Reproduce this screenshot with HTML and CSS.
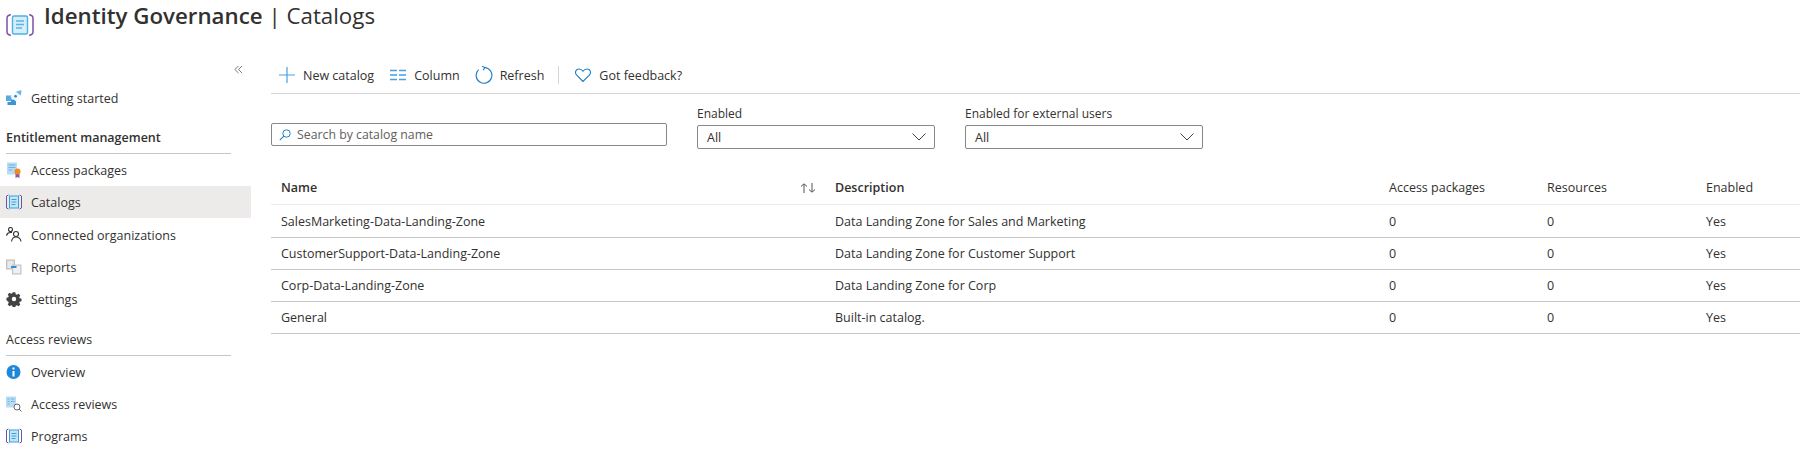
FILE: index.html
```html
<!DOCTYPE html>
<html lang="en">
<head>
    <meta charset="UTF-8">
    <meta name="viewport" content="width=device-width, initial-scale=1.0">
    <title>Identity Governance | Catalogs</title>
    <link rel="stylesheet" href="styles.css">
</head>
<body>
    <header class="page-head">
        <svg class="head-icon" viewBox="0 0 28 24" fill="none">
            <rect x="6.500" y="3" width="15" height="18" rx="1.500" fill="#d6eefa" stroke="#4fb0e4" stroke-width="1.400"/>
            <path d="M10 8h8M10 11.500h8M10 15h6" stroke="#5cb4e4" stroke-width="1.300"/>
            <path d="M4.800 1.500 2.500 2.500Q1 3.200 1 5v14q0 1.800 1.500 2.500l2.300 1M23.200 1.500l2.300 1Q27 3.200 27 5v14q0 1.800-1.500 2.500l-2.300 1" stroke="#7f4fa8" stroke-width="1.500"/>
        </svg>
        <h1 class="page-title"><strong>Identity Governance</strong> | Catalogs</h1>
    </header>

    <div class="layout">
        <nav class="sidebar">
            <div class="collapse-row">
                <svg class="collapse-icon" viewBox="0 0 10 10" fill="none"><path d="M5 1 1 5l4 4M9 1 5 5l4 4" stroke="#555" stroke-width=".9"/></svg>
            </div>
            <a class="nav-item first">
                <svg class="nav-icon" viewBox="0 0 16 16"><path d="M0 5.500h5.500V11H0z" fill="#5aaae2"/><path d="M5 9.500h5V15H1.500v-3H5z" fill="#3a96d8"/><path d="M4.500 6.500 11 1l4 3.500-5 7z" fill="#f1f8fd"/><path d="M10 1.800 15.500 0 14.800 5.500z" fill="#63b7ea"/><circle cx="9.600" cy="6.200" r="1.300" fill="#1f7fc9"/></svg>
                <span>Getting started</span>
            </a>
            <h2 class="nav-heading strong">Entitlement management</h2>
            <a class="nav-item">
                <svg class="nav-icon" viewBox="0 0 16 16"><path d="M1 .5h10v12H1z" fill="#b9dcf3"/><path d="M2.500 3h7M2.500 5.500h7M2.500 8h4" stroke="#6db4e4"/><path d="M9.500 11h4v5l-2-1-2 1z" fill="#8a5aa8"/><circle cx="11.500" cy="9.500" r="3" fill="#f08a1d"/></svg>
                <span>Access packages</span>
            </a>
            <a class="nav-item selected">
                <svg class="nav-icon" viewBox="0 0 16 16" fill="none"><rect x="3.500" y="2" width="9" height="12" fill="#c3e6f7" stroke="#3aa0dc"/><path d="M5.500 5.500h5M5.500 8h5M5.500 10.500h4" stroke="#3aa0dc"/><path d="M2.500 1 .5 2v12l2 1M13.500 1l2 1v12l-2 1" stroke="#7a4ea6"/></svg>
                <span>Catalogs</span>
            </a>
            <a class="nav-item">
                <svg class="nav-icon" viewBox="0 0 16 16" fill="none" stroke="#333" stroke-width="1.100"><circle cx="4.500" cy="2.500" r="2"/><path d="M.5 8.500C1 6.500 2.500 5.500 4.500 5.500H6"/><circle cx="10" cy="7" r="2.500"/><path d="M5.500 14.500c.5-3 2-4.500 4.500-4.500s4.500 1.500 5 4.500"/></svg>
                <span>Connected organizations</span>
            </a>
            <a class="nav-item">
                <svg class="nav-icon" viewBox="0 0 16 16"><path d="M0 .5h9v10H0z" fill="#bdbdbd"/><path d="M1.200 1.700h6.600v7.600H1.200z" fill="#e8e8e8"/><path d="M6 5.500h9.500V15.500H6z" fill="#c4c4c4"/><path d="M7.200 6.700h7.100v7.600H7.200z" fill="#f0f0f0"/><path d="M5 7h5.500v2H5z" fill="#2f8fd6"/></svg>
                <span>Reports</span>
            </a>
            <a class="nav-item">
                <svg class="nav-icon" viewBox="-1 -1 18 18"><path fill="#444" fill-rule="evenodd" d="M6.500.5h3l.4 2.100 1.300.6 1.800-1.200 2.100 2.100-1.200 1.800.5 1.300 2.100.4v3l-2.100.4-.5 1.300 1.200 1.800-2.100 2.100-1.800-1.200-1.300.5-.4 2.100h-3l-.4-2.100-1.300-.5-1.800 1.200-2.100-2.100 1.200-1.800-.5-1.300L-.5 9.500v-3l2.100-.4.500-1.300L.9 3l2.100-2.100 1.800 1.200 1.300-.5zM8 5.500a2.500 2.500 0 1 0 0 5 2.500 2.500 0 0 0 0-5z"/></svg>
                <span>Settings</span>
            </a>
            <h2 class="nav-heading">Access reviews</h2>
            <a class="nav-item">
                <svg class="nav-icon" viewBox="0 0 16 16"><circle cx="7.500" cy="8" r="7" fill="#1f86d8"/><path d="M6.500 7h2v5.500h-2zM6.500 3.500h2v2h-2z" fill="#fff"/></svg>
                <span>Overview</span>
            </a>
            <a class="nav-item">
                <svg class="nav-icon" viewBox="0 0 16 16" fill="none"><path d="M0 .5h10v11H0z" fill="#b9dcf3"/><path d="M1.500 3h2M5 3h3.500M1.500 5.500h2M5 5.500h3.500M1.500 8h2" stroke="#6db4e4"/><circle cx="11" cy="11" r="3" fill="#fff" stroke="#666"/><path d="m13 13 2.500 2.500" stroke="#666"/></svg>
                <span>Access reviews</span>
            </a>
            <a class="nav-item">
                <svg class="nav-icon" viewBox="0 0 16 16" fill="none"><rect x="3.500" y="2" width="9" height="12" fill="#c3e6f7" stroke="#3aa0dc"/><path d="M5.500 5.500h5M5.500 8h5M5.500 10.500h4" stroke="#3aa0dc"/><path d="M2.500 1 .5 2v12l2 1M13.500 1l2 1v12l-2 1" stroke="#7a4ea6"/></svg>
                <span>Programs</span>
            </a>
        </nav>

        <main class="content">
            <div class="toolbar">
                <button class="tool-btn">
                    <svg class="tool-icon" viewBox="0 0 16 16" fill="none"><path d="M8 0v16M0 8h16" stroke="#4a9fe0" stroke-width="1.200"/></svg>
                    New catalog
                </button>
                <button class="tool-btn">
                    <svg class="tool-icon" viewBox="0 0 16 16" fill="none"><path d="M0 3.500h7M9 3.500h7M0 8h7M9 8h7M0 12.500h7M9 12.500h7" stroke="#4a9fe0" stroke-width="1.300"/></svg>
                    Column
                </button>
                <button class="tool-btn tight">
                    <svg class="tool-icon refresh" viewBox="0 0 16 16" fill="none"><path d="M8.500 1.300A7 7 0 1 1 3.200 3.200" stroke="#1f7fc9"/><path d="M6.200.3 8.800 1.300 7.200 3.800" stroke="#1f7fc9"/></svg>
                    Refresh
                </button>
                <span class="tool-sep"></span>
                <button class="tool-btn">
                    <svg class="tool-icon" viewBox="0 0 16 16" fill="none"><path d="M8 14.500 1.500 8C-.5 5.500.8 2 4 2c2 0 3.200 1 4 2.300C8.800 3 10 2 12 2c3.200 0 4.500 3.500 2.500 6z" stroke="#1f7fc9" stroke-width="1.100"/></svg>
                    Got feedback?
                </button>
            </div>

            <div class="filters">
                <div class="search-box">
                    <svg class="search-icon" viewBox="0 0 12 12" fill="none"><circle cx="7.500" cy="4.500" r="3.700" stroke="#1f7fc9"/><path d="M4.800 7.200.8 11.200" stroke="#1f7fc9" stroke-width="1.100"/></svg>
                    <span>Search by catalog name</span>
                </div>
                <div class="filter">
                    <label class="filter-label">Enabled</label>
                    <div class="select-box">
                        <span>All</span>
                        <svg class="chevron" viewBox="0 0 14 8" fill="none"><path d="m.5.500 6.500 6.500L13.500.5" stroke="#444"/></svg>
                    </div>
                </div>
                <div class="filter">
                    <label class="filter-label">Enabled for external users</label>
                    <div class="select-box">
                        <span>All</span>
                        <svg class="chevron" viewBox="0 0 14 8" fill="none"><path d="m.5.500 6.500 6.500L13.500.5" stroke="#444"/></svg>
                    </div>
                </div>
            </div>

            <table class="catalogs">
                <colgroup>
                    <col class="col-name"><col class="col-desc"><col class="col-pkg"><col class="col-res"><col>
                </colgroup>
                <thead>
                    <tr>
                        <th class="name-head">
                            <div class="sort-head">
                                <span>Name</span>
                                <svg class="sort-icon" viewBox="0 0 16 10" fill="none"><path d="M4 10V1M1 3.500 4 .8l3 2.700M12 0v9M9 6.500l3 2.700 3-2.700" stroke="#555"/></svg>
                            </div>
                        </th>
                        <th>Description</th>
                        <th class="normal">Access packages</th>
                        <th class="normal">Resources</th>
                        <th class="normal">Enabled</th>
                    </tr>
                </thead>
                <tbody>
                    <tr><td>SalesMarketing-Data-Landing-Zone</td><td>Data Landing Zone for Sales and Marketing</td><td>0</td><td>0</td><td>Yes</td></tr>
                    <tr><td>CustomerSupport-Data-Landing-Zone</td><td>Data Landing Zone for Customer Support</td><td>0</td><td>0</td><td>Yes</td></tr>
                    <tr><td>Corp-Data-Landing-Zone</td><td>Data Landing Zone for Corp</td><td>0</td><td>0</td><td>Yes</td></tr>
                    <tr><td>General</td><td>Built-in catalog.</td><td>0</td><td>0</td><td>Yes</td></tr>
                </tbody>
            </table>
        </main>
    </div>
</body>
</html>
```

FILE: styles.css
```css
html, body {
    height: 454px;
    overflow: hidden;
}
body {
    margin: 0;
    font-family: "Open Sans", "Noto Sans", Arial, sans-serif;
    font-size: 12.5px;
    color: #323130;
    background-color: #fff;
}
.page-head {
    display: flex;
    align-items: flex-start;
    height: 57px;
    padding-left: 6px;
}
.head-icon {
    width: 28px;
    height: 24px;
    margin-top: 13px;
    margin-right: 10px;
}
.page-title {
    margin: 0;
    font-size: 22.300px;
    font-weight: 400;
    line-height: 32px;
    color: #323130;
}
.page-title strong {
    font-weight: 600;
}
.layout {
    display: flex;
}
.sidebar {
    width: 251px;
    flex-shrink: 0;
}
.collapse-row {
    display: flex;
    justify-content: flex-end;
    padding: 8px 8px 0 0;
    height: 17px;
}
.collapse-icon {
    width: 9px;
    height: 9px;
}
.nav-item {
    display: flex;
    align-items: center;
    height: 32px;
    padding-left: 6px;
}
.nav-item.first {
    margin-bottom: 8px;
}
.nav-item.selected {
    margin-bottom: 1px;
    background-color: #edebe9;
}
.nav-icon {
    width: 16px;
    height: 16px;
    margin-right: 9px;
}
.nav-heading {
    margin: 0 20px 0 6px;
    height: 31px;
    line-height: 32px;
    font-size: 12.5px;
    font-weight: 400;
    border-bottom: 1px solid #c8c6c4;
}
.nav-heading.strong {
    font-weight: 600;
}
.sidebar .nav-heading:not(.strong) {
    margin-top: 9px;
}
.content {
    flex: 1;
    margin-left: 20px;
}
.toolbar {
    display: flex;
    align-items: center;
    height: 36px;
    padding-left: 8px;
    border-bottom: 1px solid #d6d6d6;
}
.tool-btn {
    display: flex;
    align-items: center;
    gap: 8px;
    padding: 0;
    margin-right: 16px;
    border: 0;
    background: none;
    font: inherit;
    color: inherit;
}
.tool-btn.tight {
    margin-right: 14px;
}
.tool-icon {
    width: 16px;
    height: 16px;
}
.tool-icon.refresh {
    width: 18px;
    height: 18px;
    margin-left: -1px;
    margin-right: -1px;
}
.tool-sep {
    width: 1px;
    height: 18px;
    margin-right: 16px;
    background-color: #d6d6d6;
}
.filters {
    display: flex;
    align-items: flex-end;
    margin-top: 10px;
}
.search-box {
    display: flex;
    align-items: center;
    width: 396px;
    height: 23px;
    margin-right: 30px;
    margin-bottom: 3px;
    padding-left: 7px;
    box-sizing: border-box;
    border: 1px solid #8a8886;
    border-radius: 2px;
    font-size: 12.300px;
    color: #605e5c;
}
.search-icon {
    width: 12px;
    height: 12px;
    margin-right: 6px;
}
.filter {
    width: 238px;
    margin-right: 30px;
}
.filter-label {
    display: block;
    height: 21px;
    line-height: 20px;
    font-size: 12px;
}
.select-box {
    display: flex;
    align-items: center;
    justify-content: space-between;
    height: 24px;
    padding: 0 8px 0 9px;
    box-sizing: border-box;
    border: 1px solid #8a8886;
    border-radius: 2px;
}
.chevron {
    width: 14px;
    height: 8px;
}
.catalogs {
    width: 1529px;
    margin-top: 22px;
    border-collapse: collapse;
    table-layout: fixed;
}
.col-name { width: 554px; }
.col-desc { width: 554px; }
.col-pkg { width: 158px; }
.col-res { width: 159px; }
.catalogs th, .catalogs td {
    padding: 0 0 0 10px;
    text-align: left;
    white-space: nowrap;
}
.catalogs th {
    height: 33px;
    font-weight: 600;
    border-bottom: 1px solid #edebe9;
}
.catalogs th.normal {
    font-weight: 400;
}
.catalogs td {
    height: 31px;
    border-bottom: 1px solid #c8c6c4;
}
.catalogs tbody tr:first-child td {
    height: 32px;
}
.sort-head {
    display: flex;
    align-items: center;
    justify-content: space-between;
    padding-right: 9px;
}
.sort-icon {
    width: 16px;
    height: 10px;
}
```
